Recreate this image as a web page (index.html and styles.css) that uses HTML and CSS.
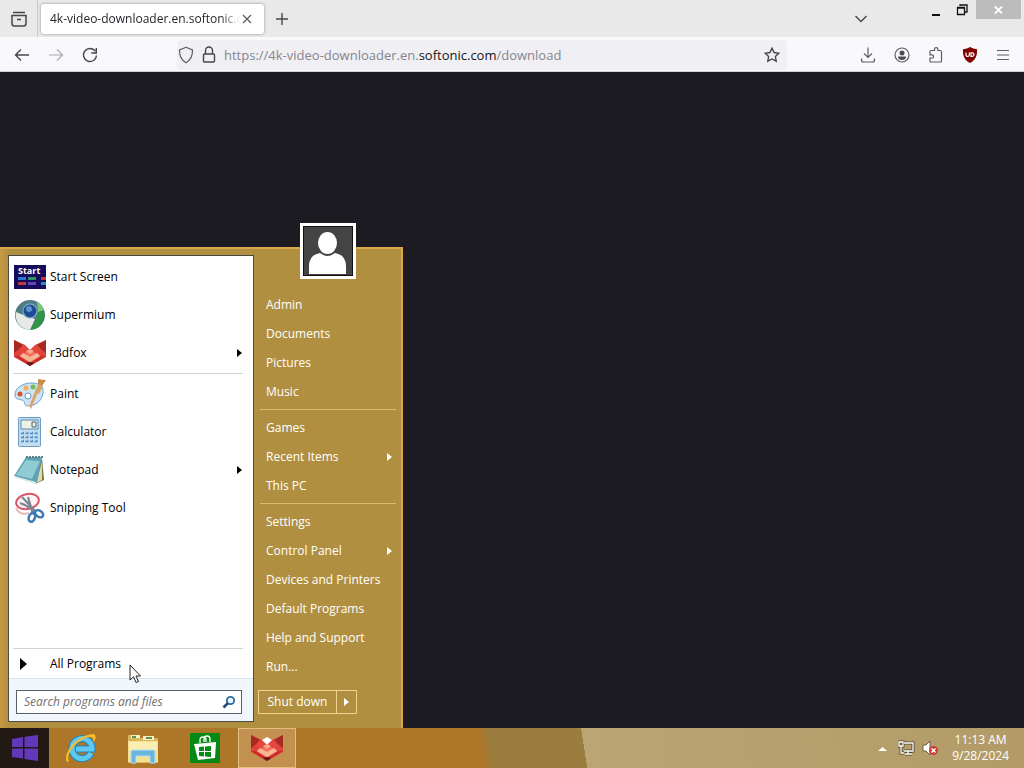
FILE: index.html
```html
<!DOCTYPE html>
<html lang="en">
<head>
<meta charset="utf-8">
<title>4k-video-downloader.en.softonic.com</title>
<link rel="stylesheet" href="styles.css">
</head>
<body>
<svg class="defs" width="0" height="0" aria-hidden="true">
  <symbol id="fox" viewBox="0 0 32 28">
    <path d="M0 1 11 6h10L32 1V18L16 27 0 18Z" fill="#e0423a"/>
    <path d="M0 1 9 6 4 11 0 14ZM32 1 23 6 28 11 32 14Z" fill="#a82824"/>
    <path d="M11 6 16 11 21 6 16 3Z" fill="#fff"/>
    <path d="M9 6 16 11 23 6 28 12 16 20 4 12Z" fill="#e5463c"/>
    <path d="M16 11 27 17 16 25 5 17Z" fill="#f0705c"/>
    <path d="M9 14 16 18 23 14 26 17 16 23 6 17Z" fill="#f9b596"/>
    <path d="M12 12 16 10 20 12 16 15Z" fill="#f8a98c"/>
    <path d="M0 17 5 17 16 24 27 17 32 17 16 27Z" fill="#c92d2a"/>
    <path d="M12 24 16 23 20 24 16 27Z" fill="#5c1a18"/>
  </symbol>
</svg>

<header class="browser">
  <div class="tabbar">
    <button class="icon-btn view-btn" aria-label="Firefox View"><svg width="18" height="18" viewBox="0 0 18 18"><path d="M3 2.500h12M2 5.500h14v8a2.500 2.500 0 0 1-2.500 2.500h-9A2.500 2.500 0 0 1 2 13.500ZM7 9.500h4" class="ln heavy"/></svg></button>
    <div class="tab"><span class="tab-title">4k-video-downloader.en.softonic.co</span><button class="icon-btn tab-close" aria-label="Close tab"><svg width="10" height="10" viewBox="0 0 10 10"><path d="m1 1 8 8m0-8-8 8" class="ln"/></svg></button></div>
    <button class="icon-btn new-tab" aria-label="New tab"><svg width="14" height="14" viewBox="0 0 14 14"><path d="M7 1v12M1 7h12" class="ln bold"/></svg></button>
    <button class="icon-btn list-tabs" aria-label="List all tabs"><svg width="14" height="10" viewBox="0 0 14 10"><path d="m1.500 2 5.500 5.500L12.500 2" class="ln bold"/></svg></button>
    <div class="window-controls">
      <button aria-label="Minimize"><svg width="10" height="12" viewBox="0 0 10 12"><path d="M1 10h8v2H1Z" fill="#111"/></svg></button>
      <button aria-label="Restore"><svg width="12" height="12" viewBox="0 0 12 12"><path d="M1.500 4h7v6.500h-7ZM1 3.500h8M4 2V1h7v7h-2" fill="none" stroke="#111" stroke-width="1.300"/></svg></button>
      <button class="close" aria-label="Close"><svg width="9" height="8" viewBox="0 0 9 8"><path d="m1 .5 7 7m0-7-7 7" fill="none" stroke="#fff" stroke-width="1.800"/></svg></button>
    </div>
  </div>
  <nav class="navbar">
    <div class="history">
      <button class="icon-btn" aria-label="Back"><svg width="16" height="14" viewBox="0 0 16 14"><path d="M15 7H1.500M7 1.500 1.500 7 7 12.500" class="ln bold"/></svg></button>
      <button class="icon-btn" aria-label="Forward" disabled><svg width="16" height="14" viewBox="0 0 16 14"><path d="M1 7h13.500M9 1.500l5.500 5.500L9 12.500" class="ln"/></svg></button>
      <button class="icon-btn" aria-label="Reload"><svg width="16" height="16" viewBox="0 0 16 16"><path d="M13.300 4.200A6.500 6.500 0 1 0 14.500 8.500M14.300 1v5H9.300" class="ln bold"/></svg></button>
    </div>
    <div class="urlbar">
      <svg width="16" height="18" viewBox="0 0 16 18"><path d="M8 1.300 14.500 4C14.700 10 12.800 14 8 16.700 3.200 14 1.300 10 1.500 4Z" class="ln"/></svg>
      <svg width="14" height="18" viewBox="0 0 14 18"><path d="M3.500 8V4.500a3.500 3.500 0 0 1 7 0V8M2.500 8h9a1 1 0 0 1 1 1v6a1 1 0 0 1-1 1h-9a1 1 0 0 1-1-1V9a1 1 0 0 1 1-1Z" class="ln bold"/></svg>
      <a class="url" href="#">https://4k-video-downloader.en.<b>softonic.com</b>/download</a>
      <button class="icon-btn star" aria-label="Bookmark this page"><svg width="16" height="16" viewBox="0 0 16 16"><path d="m8 1.200 2.100 4.300 4.700.7-3.400 3.300.8 4.700L8 12l-4.200 2.200.8-4.700L1.200 6.200l4.700-.7Z" class="ln bold"/></svg></button>
    </div>
    <div class="tools">
      <button class="icon-btn" aria-label="Downloads"><svg width="16" height="16" viewBox="0 0 16 16"><path d="M8 .5V10M4 6.500l4 4 4-4M1.500 11.500v1.500a2 2 0 0 0 2 2h9a2 2 0 0 0 2-2v-1.500" class="ln"/></svg></button>
      <button class="icon-btn" aria-label="Account"><svg width="16" height="16" viewBox="0 0 16 16"><circle cx="8" cy="8" r="7" class="ln"/><circle cx="8" cy="6" r="2.500" fill="#4c4c52"/><path d="M4 9.500h8q0 3.500-4 3.500T4 9.500Z" fill="#4c4c52"/></svg></button>
      <button class="icon-btn" aria-label="Extensions"><svg width="16" height="16" viewBox="0 0 16 16"><path d="M2 6.500v-2q0-1 1-1h3.500V2.300a1.700 1.700 0 0 1 3.400 0v1.200H12q1.500 0 1.500 1.500v9q0 1-1 1H3q-1 0-1-1v-3h2a1.600 1.600 0 0 0 0-3.200H2Z" class="ln"/></svg></button>
      <button class="icon-btn" aria-label="uBlock Origin"><svg width="16" height="16" viewBox="0 0 16 16"><path d="M8 0q3 2 7 2.200C15.500 9 13 13.500 8 16 3 13.500.5 9 1 2.200 5 2 8 0 8 0Z" fill="#800000"/><path d="M4 5.500v2.300a1.700 1.700 0 0 0 3.400 0V5.500M9 5.800h1.200a1.800 1.800 0 0 1 0 3.600H9Z" fill="none" stroke="#fff" stroke-width="1.200"/></svg></button>
      <button class="icon-btn menu-btn" aria-label="Application menu"><svg width="14" height="12" viewBox="0 0 14 12"><path d="M1 1.500h12M1 6h12M1 10.500h12" class="ln"/></svg></button>
    </div>
  </nav>
</header>

<main class="page">
  <section class="start-menu" aria-label="Start menu">
    <div class="programs">
      <ul class="list">
        <li><a href="#"><svg width="32" height="32" viewBox="0 0 32 32"><path d="M0 4h32v24H0Z" fill="#150c5c"/><text x="4" y="13" class="start-word">Start</text><path d="M4 16h8v3H4Zm0 5h8v3H4Z" fill="#2878d4"/><path d="M14 16h8v3h-8Z" fill="#2c9464"/><path d="M14 21h8v3h-8Z" fill="#6642b4"/><path d="M4 21h7v3H4ZM27 16h5v3h-5Z" fill="#bd3942"/><path d="M27 21h5v3h-5Z" fill="#268ac0"/></svg>Start Screen</a></li>
        <li><a href="#"><svg width="32" height="32" viewBox="0 0 32 32"><circle cx="16" cy="16" r="15" fill="#4f7d86"/><path d="M23 3a15 15 0 0 1-7 28l7-12Z" fill="#2f9444"/><path d="M23 3q5 2 7 8l-6 2Z" fill="#7cc67c"/><path d="M2 13 12 17l9 3-5 11A15 15 0 0 1 2 13Z" fill="#e6e9e5"/><circle cx="16" cy="12" r="7.500" fill="#8fb5c9"/><circle cx="16" cy="12" r="6.500" fill="#1c4e98"/><circle cx="15" cy="10" r="3" fill="#5b95d2"/></svg>Supermium</a></li>
        <li><a href="#"><svg width="32" height="28"><use href="#fox"/></svg>r3dfox<i class="arrow"></i></a></li>
      </ul>
      <hr>
      <ul class="list">
        <li><a href="#"><svg width="32" height="32" viewBox="0 0 32 32"><path d="M1 17C1 10 8 5 18 5c8 0 12 4 11 10-1 9-9 13-15 13-5 0-2-5-6-6-4-1-7-1-7-5Z" fill="#cfe4f3" stroke="#6da3cb"/><circle cx="6" cy="16" r="2.500" fill="#d95337"/><circle cx="12" cy="10" r="2.500" fill="#efb25e"/><circle cx="19" cy="9" r="2.500" fill="#75b957"/><circle cx="14" cy="18" r="3" fill="#fff" stroke="#5e99c9"/><path d="M25 12 17 31q-2-2-1-5l6-15Z" fill="#dba468"/><path d="m24 6 5 2-4 8-4-2Z" fill="#d3a66a"/><path d="M24 1q5 1 8 1l-4 6-4-2Z" fill="#c98b4c"/></svg>Paint</a></li>
        <li><a href="#"><svg width="32" height="32" viewBox="0 0 32 32"><rect x="4.500" y="1.500" width="22" height="29" rx="1" fill="#c3dcee" stroke="#6a9bc3"/><path d="M7 4h17v9H7Z" fill="#edf0e6" stroke="#578ab3"/><path d="M18 6h4v5h-4Z" fill="none" stroke="#45617a"/><path d="M7 17h17M7 21h17M7 25h17" stroke="#4f8cc2" stroke-width="2.500" stroke-dasharray="3 1.500"/><path d="M7 16h17M7 20h17M7 24h17" stroke="#eaf5fd" stroke-dasharray="2 2.500"/></svg>Calculator</a></li>
        <li><a href="#"><svg width="32" height="32" viewBox="0 0 32 32"><path d="M28 4 30 26l-9 4 1-9Z" fill="#7d7548"/><path d="m28 8 0 18-6 3Z" fill="#e2d9ae"/><path d="M12 3h16l-5 26L0 22Z" fill="#5da3b3"/><path d="m12 6 14 1L18 25 2 21Z" fill="#8fcbd3"/><path d="M0 22 22 28v2L1 24Z" fill="#dce9eb"/><path d="M12 3h17" stroke="#5d7f86" stroke-width="2" stroke-dasharray="2 1"/></svg>Notepad<i class="arrow"></i></a></li>
        <li><a href="#"><svg width="32" height="32" viewBox="0 0 32 32"><ellipse cx="13.500" cy="9.500" rx="11.500" ry="7.500" transform="rotate(-12 13.500 9.500)" fill="#fff4f5" stroke="#d9566a" stroke-width="2"/><path d="M2 16q4 8 13 5" fill="none" stroke="#e8b9bf" stroke-width="2"/><path d="m8 5 14 15M14 5l5 17M6 11q7 2 15 9" fill="none" stroke="#7b868e" stroke-width="2.200"/><ellipse cx="18" cy="25.500" rx="3" ry="4.500" transform="rotate(20 18 25)" fill="none" stroke="#3a79b1" stroke-width="2.500"/><ellipse cx="25.500" cy="21.500" rx="4.500" ry="3" transform="rotate(35 25 21)" fill="none" stroke="#3a79b1" stroke-width="2.500"/></svg>Snipping Tool</a></li>
      </ul>
      <hr class="push">
      <a class="all" href="#"><i class="arrow big"></i>All Programs</a>
      <div class="search-area"><label class="search"><input type="text" placeholder="Search programs and files" aria-label="Search programs and files"><svg width="14" height="14" viewBox="0 0 14 14"><circle cx="8.500" cy="5.500" r="3.700" fill="#e9f5ff" stroke="#2c6f9f" stroke-width="1.800"/><path d="m6 8-4.500 4.500" stroke="#234c78" stroke-width="2.600"/></svg></label></div>
    </div>
    <div class="places">
      <div class="avatar"><svg width="46" height="46" viewBox="0 0 46 46"><ellipse cx="22.500" cy="15" rx="9.500" ry="11" fill="#fff"/><path d="M4 46V38q0-11 11-13 7.500 6 15 0 11 2 11 13v8Z" fill="#fff"/></svg></div>
      <ul class="links">
        <li><a href="#">Admin</a></li>
        <li><a href="#">Documents</a></li>
        <li><a href="#">Pictures</a></li>
        <li><a href="#">Music</a></li>
      </ul>
      <hr>
      <ul class="links">
        <li><a href="#">Games</a></li>
        <li><a href="#">Recent Items<i class="arrow"></i></a></li>
        <li><a href="#">This PC</a></li>
      </ul>
      <hr>
      <ul class="links">
        <li><a href="#">Settings</a></li>
        <li><a href="#">Control Panel<i class="arrow"></i></a></li>
        <li><a href="#">Devices and Printers</a></li>
        <li><a href="#">Default Programs</a></li>
        <li><a href="#">Help and Support</a></li>
        <li><a href="#">Run...</a></li>
      </ul>
      <div class="power"><button>Shut down</button><button class="more" aria-label="More power options"><i class="arrow"></i></button></div>
    </div>
  </section>
</main>

<footer class="taskbar">
  <button class="start" aria-label="Start"><svg width="28" height="26" viewBox="0 0 28 26"><path d="m1 4 11-2v10H1ZM13.500 1.800 27 0v12H13.500ZM1 13.500h11v10L1 22ZM13.500 13.500H27V26l-13.500-2Z" fill="#6238b8"/></svg></button>
  <div class="apps">
    <button aria-label="Internet Explorer"><svg width="32" height="32" viewBox="0 0 32 32"><path d="M26 21A10 10 0 1 1 27 17H11" fill="none" stroke="#2584bd" stroke-width="7"/><path d="M26 21A10 10 0 1 1 27 17H11" fill="none" stroke="#5ecaf2" stroke-width="5"/><path d="M2 30C-3 22 12 2 29 2q4 4-1 8 1-5-3-5C13 6 0 22 4 29Z" fill="#f6bd26"/></svg></button>
    <button aria-label="File Explorer"><svg width="32" height="32" viewBox="0 0 32 32"><path d="M1 3h9l2 3h19v25H1Z" fill="#d8b85c"/><path d="M4 3h9v3H4ZM16 4h11v4H16Z" fill="#fff3ba"/><path d="M5 5h4M19 6h6" stroke="#5d8f60" stroke-width="2"/><path d="M1 9h30v21H1Z" fill="#f5df91"/><path d="M2 10h28v8H2Z" fill="#faeeb3"/><path d="M4 31V20q0-2 2-2h20q2 0 2 2v11h-5v-7H9v7Z" fill="#6bb5dc" stroke="#b1e1f3"/></svg></button>
    <button aria-label="Store"><svg width="30" height="30" viewBox="0 0 30 30"><path d="M0 0h30v30H0Z" fill="#078916"/><path d="M10 10V7q0-3 3-3 3 0 3 3v2M14 9V6q0-3 3-3 3 0 3 3v3" fill="none" stroke="#fff" stroke-width="1.300"/><path d="m4 11 22-2-1 16-17 2Z" fill="#fff"/><path d="m9 14 5-.5v4.500H9ZM15 13.500l6-.5v5h-6ZM9 19h5v4.500L9 23ZM15 19h6v5l-6-.5Z" fill="#078916"/></svg></button>
    <button class="active" aria-label="r3dfox"><svg width="32" height="28"><use href="#fox"/></svg></button>
  </div>
  <div class="tray">
    <button aria-label="Show hidden icons"><svg width="9" height="5" viewBox="0 0 9 5"><path d="m0 5 4.500-4L9 5Z" fill="#fff"/></svg></button>
    <button aria-label="Network"><svg width="17" height="16" viewBox="0 0 17 16"><path d="M6 3h9v8H6M10 11v3M7 14h7M1 2h4v4H1ZM3 6v7h3" fill="none" stroke="#51472f" stroke-width="3"/><path d="M6 3h9v8H6M10 11v3M7 14h7M1 2h4v4H1ZM3 6v7h3" fill="none" stroke="#fff" stroke-width="1.300"/></svg></button>
    <button aria-label="Volume muted"><svg width="17" height="16" viewBox="0 0 17 16"><path d="M1 5h3l4-4v14l-4-4H1Z" fill="#fff" stroke="#6b6048"/><circle cx="11.500" cy="10.500" r="4.500" fill="#cf3e2c"/><path d="m9.500 8.500 4 4m0-4-4 4" stroke="#fff" stroke-width="1.500"/></svg></button>
    <div class="clock"><time>11:13 AM</time><time>9/28/2024</time></div>
  </div>
</footer>
<svg class="cursor" width="13" height="20" viewBox="0 0 13 20" aria-hidden="true"><path d="M1 1v15l3.500-3.200L7 18.500l2.500-1L7 12h4.500Z" fill="#fff" stroke="#222"/></svg>
</body>
</html>
```
FILE: styles.css
```css
* { box-sizing: border-box; }

body {
  margin: 0;
  min-height: 100vh;
  display: flex;
  flex-direction: column;
  font-family: "Open Sans", "Noto Sans", sans-serif;
  font-size: 12px;
  line-height: 16px;
  color: #000;
  background: #1c1b22;
}

button, input { font: inherit; color: inherit; }
button { background: none; border: 0; padding: 0; display: flex; align-items: center; justify-content: center; }
a { color: inherit; text-decoration: none; }
ul { list-style: none; margin: 0; padding: 0; }
svg { flex: none; display: block; }
.defs { position: absolute; }

.ln { fill: none; stroke: #5b5b66; stroke-width: 1.2px; }
.bold { stroke: #45454c; stroke-width: 1.4px; }
.heavy { stroke: #45454c; stroke-width: 1.5px; }

/* Browser chrome */
.tabbar { display: flex; align-items: center; height: 37px; background: #e9e9ea; }
.view-btn { width: 38px; height: 37px; border-right: 1px solid #c9c9cd; }
.tab {
  display: flex;
  align-items: center;
  width: 223px;
  height: 30px;
  margin-left: 3px;
  padding: 0 10px 0 9px;
  background: #fff;
  border-radius: 3px;
  box-shadow: 0 0 3px #0006;
}
.tab-title {
  flex: 1;
  overflow: hidden;
  white-space: nowrap;
  color: #25252b;
  mask-image: linear-gradient(to right, #000 90%, transparent);
}
.tab-close { width: 14px; height: 20px; }
.new-tab { width: 36px; height: 36px; }
.list-tabs { width: 30px; height: 30px; margin-left: auto; }
.window-controls { display: flex; align-self: flex-start; margin-left: 47px; margin-right: 3px; }
.window-controls button { width: 26px; height: 19px; }
.window-controls .close { width: 45px; margin-left: 1px; background: #bcbcbc; }

.navbar { display: flex; align-items: center; height: 35px; padding-top: 1px; background: #f9f9fb; border-bottom: 1px solid #d0d0d6; }
.history { display: flex; width: 177px; padding-left: 5px; }
.history .icon-btn { width: 34px; height: 32px; }
.history .icon-btn:disabled { opacity: 0.5; }
.urlbar { flex: 1; display: flex; align-items: center; gap: 8px; height: 30px; padding-left: 1px; background: #f0f0f4; border-radius: 4px; }
.url { flex: 1; font-size: 13px; line-height: 20px; color: #85858d; white-space: nowrap; }
.url b { font-weight: 400; color: #15141a; }
.star { width: 30px; height: 30px; }
.tools { display: flex; padding: 0 5px 0 64px; }
.tools .icon-btn { width: 34px; height: 32px; }
.tools .menu-btn { width: 32px; }

/* Start menu */
.page { flex: 1; position: relative; }
.start-menu {
  position: absolute;
  left: 0;
  bottom: 0;
  display: flex;
  width: 403px;
  padding: 6px 0 6px 8px;
  background: linear-gradient(to right, #c99a42 0, #b18f40 8px);
  border: solid #d9a84a;
  border-width: 2px 2px 0 0;
}
.programs { display: flex; flex-direction: column; width: 246px; padding-top: 2px; background: #fff; border: 1px solid #4c4a49; }
.programs hr { width: 230px; height: 1px; margin: 1px 9px 1px 4px; border: 0; background: #ccd3da; }
.programs .push { margin-top: auto; margin-bottom: 0; }
.list a { display: flex; align-items: center; gap: 4px; height: 38px; padding: 0 11px 0 5px; }
.start-word { font: bold 9px "Open Sans", sans-serif; fill: #fff; }
.arrow { width: 0; height: 0; margin-left: auto; border: solid transparent; border-width: 4px 0 4px 5px; border-left-color: currentColor; }
.arrow.big { margin: 0 23px 0 0; border-width: 6px 0 6px 7px; }
.all { display: flex; align-items: center; height: 29px; padding-left: 11px; }
.search-area { padding: 11px 11px 7px 7px; background: #f0f6fb; border-top: 1px solid #d6e3ed; }
.search { display: flex; align-items: center; height: 24px; padding: 0 5px 0 7px; background: #fff; border: 1px solid #59606c; }
.search input { flex: 1; min-width: 0; padding: 0; border: 0; outline: 0; background: none; }
.search input::placeholder { color: #707070; font-style: italic; opacity: 1; }

.places { flex: 1; padding: 0 5px 8px 4px; color: #fff; }
.avatar { width: 56px; height: 56px; margin: -32px 0 11px 42px; border: 3px solid #fff; background: #444; box-shadow: inset 0 0 0 1px #101010; padding: 2px; }
.places hr { height: 1px; margin: 3px 0 3px 2px; border: 0; background: #e0bb6b; }
.links a { display: flex; align-items: center; height: 29px; padding: 0 4px 0 8px; }
.power { display: flex; width: 99px; height: 24px; margin-top: 9px; border: 1px solid #f0d38f; }
.power button { flex: 1; }
.power .more { flex: none; width: 20px; border-left: 1px solid #f0d38f; }
.power .arrow { margin: 0; }

/* Taskbar */
.taskbar {
  display: flex;
  height: 40px;
  color: #fff;
  background:
    linear-gradient(81deg, #ae7628 0, #ae7628 47%, #9b7e3f 48%, #9b7e3f 57%, #baa573 57%, #b29b67 100%);
}
.start { width: 49px; background: #231914; }
.apps { display: flex; gap: 4px; padding-left: 3px; }
.apps button { width: 58px; }
.apps .active { background: #c29150; border: 1px solid #e4bd83; }
.tray { display: flex; align-items: center; gap: 7px; margin-left: auto; padding-right: 15px; }
.tray button { height: 24px; }
.tray button:first-child { margin-right: 4px; }
.clock { display: flex; flex-direction: column; align-items: center; margin-left: 6px; }

.cursor { position: absolute; left: 129px; top: 664px; }
```
